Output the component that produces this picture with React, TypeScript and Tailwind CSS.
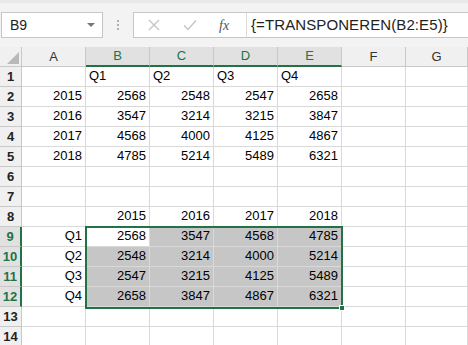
import React from "react";

type Cell = { v: string; left?: boolean };

const rows: Record<number, string[]> = {
  1: ["", "Q1", "Q2", "Q3", "Q4"],
  2: ["2015", "2568", "2548", "2547", "2658"],
  3: ["2016", "3547", "3214", "3215", "3847"],
  4: ["2017", "4568", "4000", "4125", "4867"],
  5: ["2018", "4785", "5214", "5489", "6321"],
  8: ["", "2015", "2016", "2017", "2018"],
  9: ["Q1", "2568", "3547", "4568", "4785"],
  10: ["Q2", "2548", "3214", "4000", "5214"],
  11: ["Q3", "2547", "3215", "4125", "5489"],
  12: ["Q4", "2658", "3847", "4867", "6321"],
};

const cols = ["A", "B", "C", "D", "E", "F", "G"];
const font = { fontFamily: "'Liberation Sans', Arial, sans-serif" };

export default function App() {
  const rowNums = Array.from({ length: 14 }, (_, i) => i + 1);
  return (
    <div className="w-[468px] h-[345px] overflow-hidden bg-white relative text-[#000]" style={font}>
      {/* formula bar */}
      <div className="h-[47px] bg-[#f3f3f3] border-t-[3px] border-[#e8e8e8] flex items-start pt-[9px]">
        <div className="ml-[1px] w-[102px] h-[26px] bg-white border border-[#c6c6c6] flex items-center justify-between pl-[8px] pr-[7px]">
          <span className="text-[14px] text-[#222]">B9</span>
          <svg width="8" height="5" viewBox="0 0 8 5"><path d="M0 0 L8 0 L4 4 Z" fill="#777" /></svg>
        </div>
        <div className="w-[30px] h-[26px] flex flex-col items-center justify-center gap-[2px]">
          <div className="w-[2px] h-[2px] bg-[#b0b0b0]" />
          <div className="w-[2px] h-[2px] bg-[#b0b0b0]" />
          <div className="w-[2px] h-[2px] bg-[#b0b0b0]" />
        </div>
        <div className="flex-1 h-[26px] bg-white border border-[#c6c6c6] border-r-0 flex items-center">
          <div className="w-[112px] h-full flex items-center">
            <svg className="ml-[14px]" width="12" height="12" viewBox="0 0 12 12">
              <path d="M1 1 L11 11 M11 1 L1 11" stroke="#c4c4c4" strokeWidth="1.3" />
            </svg>
            <svg className="ml-[23px]" width="14" height="12" viewBox="0 0 14 12">
              <path d="M1 6.5 L5 10.5 L13 1.5" stroke="#c4c4c4" strokeWidth="1.3" fill="none" />
            </svg>
            <span className="ml-[22px] text-[14px] italic text-[#555]" style={{ fontFamily: "'Liberation Serif', serif" }}>fx</span>
          </div>
          <div className="w-[1px] h-full bg-[#dadada]" />
          <span className="ml-[4px] text-[15px] text-[#222] tracking-[0.1px]">{"{=TRANSPONEREN(B2:E5)}"}</span>
        </div>
      </div>

      {/* header row */}
      <div className="flex h-[20px]">
        <div className="w-[22px] h-full bg-[#f0f0f0] border-r border-b border-[#c8c8c8] flex items-end justify-end pr-[2px] pb-[2px]">
          <svg width="12" height="12" viewBox="0 0 12 12"><path d="M12 0 L12 12 L0 12 Z" fill="#b9b9b9" /></svg>
        </div>
        {cols.map((c, i) => {
          const sel = i >= 1 && i <= 4;
          return (
            <div
              key={c}
              className={
                (i === 6 ? "flex-1 " : "w-[64px] ") +
                "h-full flex items-center justify-center text-[13px] border-r border-[#c8c8c8] " +
                (sel ? "bg-[#e1e1e1] text-[#217346] border-b-2 border-b-[#217346]" : "bg-[#f0f0f0] text-[#333] border-b border-b-[#c8c8c8]")
              }
            >
              {c}
            </div>
          );
        })}
      </div>

      {/* rows */}
      {rowNums.map((r) => {
        const data = rows[r] || ["", "", "", "", ""];
        const selRow = r >= 9 && r <= 12;
        return (
          <div key={r} className="flex h-[20px]">
            <div
              className={
                "w-[22px] h-full flex items-center justify-center text-[13px] font-bold border-b border-[#c8c8c8] " +
                (selRow ? "bg-[#e1e1e1] text-[#217346] border-r-2 border-r-[#217346]" : "bg-[#f0f0f0] text-[#222] border-r border-r-[#c8c8c8]")
              }
            >
              {r}
            </div>
            {cols.map((c, i) => {
              const v = i < 5 ? data[i] : "";
              const left = r === 1;
              const shaded = selRow && i >= 1 && i <= 4 && !(r === 9 && i === 1);
              return (
                <div
                  key={c}
                  className={
                    (i === 6 ? "flex-1 " : "w-[64px] ") +
                    "h-full flex items-end pb-[1px] text-[13px] border-r border-b border-[#d9d9d9] " +
                    (left ? "justify-start pl-[3px] " : "justify-end pr-[3px] ") +
                    (shaded ? "bg-[#c6c6c6]" : "bg-white")
                  }
                >
                  {v}
                </div>
              );
            })}
          </div>
        );
      })}

      {/* selection border */}
      <div className="absolute left-[85px] top-[226px] w-[258px] h-[83px] border-2 border-[#217346] pointer-events-none" />
      <div className="absolute left-[339px] top-[305px] w-[6px] h-[6px] bg-[#217346] border border-white" />
    </div>
  );
}
